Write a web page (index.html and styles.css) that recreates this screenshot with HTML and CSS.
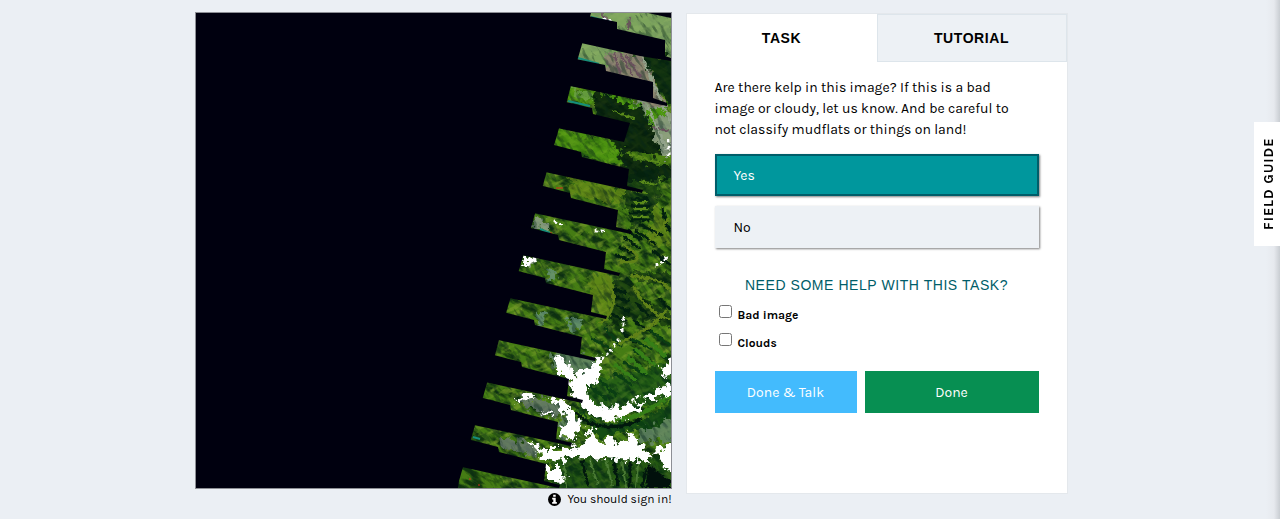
FILE: index.html
```html
<!DOCTYPE html>
<html lang="en">
<head>
  <meta charset="UTF-8" />
  <meta name="viewport" content="width=device-width, initial-scale=1" />
  <title>Floating Forests - Classify</title>
  <link rel="stylesheet" href="styles.css">
</head>
<body>
  <main class="classifier">
    <section class="subject">
      <svg class="subject-image" viewBox="196 14 475 475" role="img" aria-label="Satellite image of a coastline">
        <defs>
          <!-- hillside shading -->
          <filter id="terrain" x="0" y="0" width="100%" height="100%" color-interpolation-filters="sRGB">
            <feTurbulence type="fractalNoise" baseFrequency="0.05 0.16" numOctaves="4" seed="8" />
            <feColorMatrix type="matrix" values="0 0 0 0 0  0 0 0 0 0.12  0 0 0 0 0.05  4 1 0 0 -2.2" />
          </filter>
          <filter id="grain" x="0" y="0" width="100%" height="100%" color-interpolation-filters="sRGB">
            <feTurbulence type="fractalNoise" baseFrequency="0.07 0.2" numOctaves="3" seed="21" />
            <feColorMatrix type="matrix" values="0 0 0 0 0.47  0 0 0 0 0.62  0 0 0 0 0.16  0 4 0 0 -1.9" />
          </filter>
          <filter id="relief" x="0" y="0" width="100%" height="100%" color-interpolation-filters="sRGB">
            <feTurbulence type="fractalNoise" baseFrequency="0.07 0.22" numOctaves="3" seed="33" />
            <feColorMatrix type="matrix" values="0 0 0 0 0.02  0 0 0 0 0.14  0 0 0 0 0.1  0 0 6 0 -3" />
          </filter>
          <filter id="rough" x="-10%" y="-10%" width="120%" height="120%" color-interpolation-filters="sRGB">
            <feTurbulence type="fractalNoise" baseFrequency="0.16" numOctaves="3" seed="4" />
            <feDisplacementMap in="SourceGraphic" scale="16" xChannelSelector="R" yChannelSelector="G" />
          </filter>
          <filter id="rough-fine" x="-10%" y="-10%" width="120%" height="120%" color-interpolation-filters="sRGB">
            <feTurbulence type="fractalNoise" baseFrequency="0.25" numOctaves="2" seed="9" />
            <feDisplacementMap in="SourceGraphic" scale="5" xChannelSelector="R" yChannelSelector="G" />
            <feGaussianBlur stdDeviation="0.5" />
          </filter>
          <path id="gap" d="M-20 -36 L9 -27 L36 -20 L37 -15 L84 -3 L82 14 L98 18 L97 21 L0 0 L-20 0 Z" />
        </defs>

        <rect x="440" y="14" width="231" height="475" fill="#457c14" />

        <rect x="400" y="-100" width="400" height="620" filter="url(#terrain)" opacity="0.75" transform="rotate(32 555 250)" />
        <rect x="400" y="-100" width="400" height="620" filter="url(#grain)" opacity="0.7" transform="rotate(-28 555 250)" />

        <!-- ground cover -->
        <g filter="url(#rough)" opacity="0.8">
          <path fill="#8cb070" d="M580 5 H680 V60 L640 50 L600 76 L570 60 Z" />
          <path fill="#9b8784" d="M606 52 L640 54 L656 86 L668 110 L640 104 L650 88 L604 76 Z" />
          <path fill="#04200e" d="M641 56 L680 60 V108 L668 104 L657 86 Z" />
          <path fill="#031a0c" d="M594 90 L640 104 L650 126 L664 160 L680 158 V178 L626 184 L616 150 L612 140 L598 120 Z" />
          <path fill="#97a492" d="M628 100 L662 108 L680 122 V162 L663 158 L652 138 L648 118 L640 108 Z" />
          <path fill="#4fa010" d="M648 108 L666 112 L650 130 Z M600 92 L626 98 L644 110 L620 104 Z" />
          <path fill="#4c8212" d="M618 152 L650 153 L680 162 L676 168 L640 162 Z" />
          <path fill="#93a291" d="M534 215 L550 226 L548 232 L532 226 Z M520 257 L538 260 L530 268 Z M568 86 L592 94 L592 104 L578 98 Z" />
          <path fill="#67927a" d="M548 270 L556 273 L554 284 L545 281 Z M537 312 L546 314 L545 326 L535 322 Z M566 318 L584 322 L576 334 L570 330 Z" />
          <path fill="#64866b" d="M548 352 L600 360 L592 378 L552 368 Z M562 412 L582 420 L574 440 L558 438 Z M640 424 L680 415 V442 L640 444 Z" />
          <path fill="#6a7a72" d="M520 396 L562 404 L556 420 L524 408 Z M500 438 L540 446 L536 458 L502 450 Z" />
          <path fill="#0b4214" d="M574 408 L596 424 L640 422 L680 400 V418 L640 430 L600 438 Z" />
        </g>
        <g filter="url(#rough)" opacity="0.55">
          <path fill="#52a50e" d="M555 128 L614 142 L624 168 L580 158 L550 144 Z M566 86 L594 92 L592 106 L566 102 Z" />
          <path fill="#04240f" d="M628 176 L660 170 V192 L650 218 L632 230 L624 196 Z" />
          <path fill="#719019" d="M592 272 L610 276 L618 306 L604 318 L588 300 Z M570 178 L626 190 L620 206 L572 196 Z M656 200 L680 250 L646 240 Z" />
          <path fill="#041f0e" d="M614 280 L632 282 L640 300 L680 316 V330 L628 318 L610 330 Z M632 272 L680 276 V288 L640 282 Z" />
          <path fill="#0d4a17" d="M590 382 L671 364 L680 398 L600 422 L576 408 Z" />
          <path fill="#0a3a12" d="M550 456 L656 460 L680 480 V494 H550 Z" />
        </g>

        <rect x="400" y="-100" width="400" height="620" filter="url(#relief)" opacity="0.4" transform="rotate(58 555 250)" />

        <!-- ridges and valleys -->
        <g fill="none" stroke-linecap="round" filter="url(#rough-fine)">
          <path stroke="#02200f" stroke-width="3" d="M632 200 H648 M632 207 H648 M631 214 H650 M631 221 H648 M628 232 L640 240 M624 238 L638 248 M620 248 L634 254 M616 256 L630 262 M636 232 L654 244 M640 226 L662 236 M662 210 L669 232 M654 252 L670 266" />
          <path stroke="#02200f" stroke-width="3" d="M614 290 L626 294 M614 298 L628 302 M616 306 L628 312 M613 316 L626 322 M636 304 L650 318 M646 304 L660 320 M634 322 L650 332 M660 300 L670 310 M622 332 L636 344" />
          <path stroke="#0a3d13" stroke-width="3" d="M592 340 L612 350 M606 330 L620 346 M632 340 L650 350 M634 352 L654 364 M624 364 L646 376 M614 374 L632 386 M600 382 L616 396 M588 386 L606 400 M650 332 L670 346 M654 346 L666 360" />
          <path stroke="#608218" stroke-width="3" d="M606 276 C616 292 618 312 600 324 M632 276 C646 282 658 276 671 292 M650 242 L668 220 M626 248 C644 256 640 266 620 262 M634 288 C642 304 656 318 670 320 M620 344 L650 328 L666 312" />
          <path stroke="#5a8a1a" stroke-width="2" d="M634 203 H646 M634 210 H647 M633 218 H648 M632 192 L646 194 M640 182 L656 186 M606 122 L622 126 M614 112 L634 120 M630 156 L660 164" />
          <path stroke="#367f17" stroke-width="4" d="M598 410 C622 434 650 410 674 394 M634 380 L616 366 M646 374 L628 358 M654 366 L636 350 M664 356 L646 340" />
          <path stroke="#4a7a34" stroke-width="2" d="M590 462 L598 486 M606 460 L612 486 M622 462 L626 488 M638 466 L636 488 M564 464 L566 488" />
          <path stroke="#01180d" stroke-width="3" d="M582 462 L588 486 M614 462 L618 486 M630 464 V488 M646 470 L642 488 M576 414 C590 430 620 432 640 420" />
          <path fill="#01100c" stroke="none" d="M648 466 L671 482 V489 H646 Z" />
          <path stroke="#6a505d" stroke-width="2" d="M614 54 L620 74 M626 56 L640 78 M621 56 L632 76 M602 16 L616 28 M630 18 L628 30 M654 128 L668 132" />
          <path stroke="#94a48c" stroke-width="2" d="M641 56 L670 122 M648 108 L666 150" />
        </g>

        <!-- snow and cloud -->
        <g fill="#fff" filter="url(#rough)">
          <path d="M554 356 L566 362 L574 376 L590 370 L602 356 L600 376 L592 386 L576 386 L560 376 Z" />
          <path d="M570 376 L584 382 L588 396 L598 408 L604 404 L606 411 L616 406 L622 412 L630 400 L634 408 L646 398 L640 412 L612 421 L590 416 L580 404 L572 392 Z" />
          <path d="M642 402 L658 390 L676 382 V394 L650 400 Z M662 366 L676 360 V374 L664 378 Z" />
          <path d="M548 396 L566 402 L576 418 L582 428 L572 442 L558 434 L568 422 Z" />
          <path d="M526 442 L546 450 L568 450 L584 444 L592 428 L600 446 L612 436 L618 446 L632 434 L640 446 L654 460 L640 462 L584 459 L556 462 L542 458 Z" />
          <path d="M654 450 L678 444 V478 L664 468 Z M546 468 L560 468 L564 484 L548 480 Z" />
          <path d="M527 394 L534 398 L516 404 Z M520 258 L540 260 L524 266 Z M540 412 L554 414 L552 418 Z" />
        </g>
        <g stroke="#fff" stroke-width="3" stroke-linecap="round" stroke-dasharray="1 5" fill="none" filter="url(#rough-fine)">
          <path d="M598 364 L608 354 L618 342 L618 336 M622 332 L624 318 M656 266 L662 264 L669 256 M596 232 H604 M606 412 L622 404 M628 406 L640 396 M555 223 L562 226 M604 20 L612 22 M669 142 V158" />
        </g>
        <path stroke="#158e7b" stroke-width="2" fill="none" d="M591 18 L614 24 M578 59 L599 65 M568 102 L590 107 M540 230 L550 234 M473 438 L480 440" />
        <path stroke="#d52b1b" stroke-width="1" d="M556 189 H563 M469 480 H471 M478 486 H480 M550 234 H552" />

        <!-- open water and missing scan lines -->
        <g fill="#00000f">
          <path d="M196 14 H591 L578 59 L567 102 L555 143 L543 186 L531 229 L519 271 L506 314 L495 356 L483 398 L471 440 L459 482 L458 489 H196 Z" />
          <path d="M648 14 H671 V19 Z" />
          <path d="M588 17 L617 23 L617 30 L665 41 V57 L671 59 V62 L640 57 L581 44 L570 44 Z" />
          <path d="M576 60 L605 66 L606 72 L653 83 V99 L667 104 V107 L570 87 H560 Z" />
          <path d="M566 103 L592 109 L593 115 L630 124 L624 143 L557 129 Z" />
          <use href="#gap" x="545" y="173" />
          <use href="#gap" x="534" y="214" />
          <use href="#gap" x="522" y="256" />
          <use href="#gap" x="509" y="299" />
          <use href="#gap" x="498" y="341" />
          <use href="#gap" x="485" y="383" />
          <use href="#gap" x="474" y="426" />
          <use href="#gap" x="462" y="468" />
        </g>
      </svg>
      <p class="sign-in">
        <svg class="info-icon" viewBox="0 0 14 14" aria-hidden="true">
          <circle cx="7" cy="7" r="7" />
          <path fill="#fff" d="M5.600 2h2.700v2.100H5.600z M4.500 5.200h3.800v4.500h1.200v1.800h-5V9.700h1.200V7H4.500z" />
        </svg>
        <span>You should sign in!</span>
      </p>
    </section>

    <section class="panel">
      <div class="tabs">
        <button class="tab active" type="button">Task</button>
        <button class="tab" type="button">Tutorial</button>
      </div>

      <form class="task">
        <p class="question">Are there kelp in this image? If this is a bad image or cloudy, let us know. And be careful to not classify mudflats or things on land!</p>

        <div class="answers">
          <button class="answer selected" type="button">Yes</button>
          <button class="answer" type="button">No</button>
        </div>

        <button class="help" type="button">Need some help with this task?</button>

        <div class="shortcuts">
          <label class="shortcut"><input type="checkbox" name="bad-image"><span>Bad image</span></label>
          <label class="shortcut"><input type="checkbox" name="clouds"><span>Clouds</span></label>
        </div>

        <div class="actions">
          <a class="action talk" href="#talk">Done &amp; Talk</a>
          <button class="action done" type="button">Done</button>
        </div>
      </form>
    </section>
  </main>

  <button class="field-guide" type="button">Field Guide</button>
</body>
</html>
```

FILE: styles.css
```css
/* base */
* { margin: 0; padding: 0; box-sizing: border-box; }

body {
  min-height: 100vh;
  padding: 12px 18px 10px 0;
  background: linear-gradient(to left, #c9cdd2 0, #e6e9ee 6px, #ebeff4 14px, #ebeff4 100%);
  color: #000;
  font-family: Karla, Inter, sans-serif;
  font-size: 14px;
}

button,
input {
  font: inherit;
}

button {
  border: none;
  cursor: pointer;
}

/* two columns */
.classifier {
  display: grid;
  grid-template-columns: minmax(0, 477fr) minmax(0, 382fr);
  gap: 14px;
  max-width: 873px;
  margin: 0 auto;
}

/* subject */
.subject-image {
  display: block;
  width: 100%;
  border: 1px solid #8d8f95;
  background: #00000f;
}

.sign-in {
  display: flex;
  align-items: center;
  justify-content: flex-end;
  gap: 6px;
  font-size: 12px;
  line-height: 20px;
}

.info-icon {
  width: 13px;
  height: 13px;
}

/* task panel */
.panel {
  align-self: start;
  min-height: 481px;
  margin-top: 1px;
  background: #fff;
  border: 1px solid #e4e8ec;
}

.tabs {
  display: flex;
}

.tab {
  flex: 1;
  height: 48px;
  background: #edf1f5;
  border: 1px solid #dde5eb;
  color: #000;
  font: bold 14px "Liberation Sans", Arial, sans-serif;
  letter-spacing: 0.04em;
  text-transform: uppercase;
}

.tab.active {
  background: #fff;
  border-color: #fff;
}

.task {
  padding: 15px 28px;
}

.question {
  padding-right: 10px;
  line-height: 21px;
}

.answers {
  display: grid;
  gap: 10px;
  margin-top: 14px;
}

.answer {
  height: 42px;
  padding: 0 17px;
  background: #edf1f5;
  border: 2px solid #edf1f5;
  box-shadow: 1px 1px 2px rgba(0, 0, 0, 0.5);
  color: #000;
  text-align: left;
}

.answer.selected {
  background: #00979d;
  border-color: #005d69;
  color: #fff;
}

.help {
  display: block;
  margin: 27px auto 0;
  background: none;
  color: #005d69;
  font: 14px "Liberation Sans", Arial, sans-serif;
  letter-spacing: 0.04em;
  line-height: 20px;
  text-transform: uppercase;
}

.shortcuts {
  display: grid;
  gap: 8px;
  margin-top: 10px;
}

.shortcut {
  display: flex;
  gap: 6px;
  padding-left: 4px;
  font-size: 12px;
  font-weight: bold;
  line-height: 20px;
}

.shortcut input {
  width: 13px;
  height: 13px;
}

.actions {
  display: grid;
  grid-template-columns: 142fr 174fr;
  gap: 8px;
  margin-top: 18px;
}

.action {
  display: grid;
  place-items: center;
  height: 42px;
  color: #fff;
  text-decoration: none;
}

.talk { background: #43bbfd; }
.done { background: #078f52; }

/* stays on the right edge of the window */
.field-guide {
  position: fixed;
  top: 122px;
  right: 0;
  width: 26px;
  height: 124px;
  padding-right: 4px;
  background: #fff;
  color: #000;
  font-size: 14px;
  font-weight: bold;
  letter-spacing: 1px;
  text-transform: uppercase;
  writing-mode: vertical-rl;
  rotate: 180deg;
}
```
